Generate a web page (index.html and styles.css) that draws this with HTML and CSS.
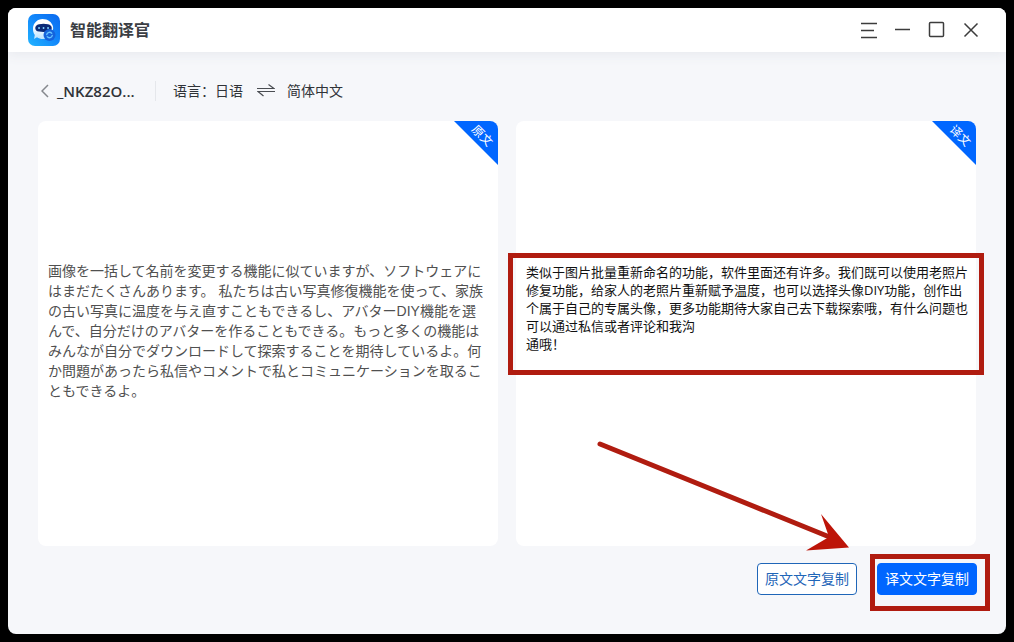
FILE: index.html
```html
<!DOCTYPE html>
<html lang="zh-CN">
<head>
<meta charset="utf-8">
<title>智能翻译官</title>
<link rel="stylesheet" href="styles.css">
</head>
<body>
<div class="window">
  <header class="titlebar">
    <svg class="logo" viewBox="0 0 32 32" aria-hidden="true">
      <defs>
        <linearGradient id="tile" x1="0" y1="1" x2="1" y2="0"><stop offset="0" stop-color="#22b4ff"/><stop offset=".5" stop-color="#1389fb"/><stop offset="1" stop-color="#0a68ee"/></linearGradient>
        <linearGradient id="face" x1="0" y1="0" x2="0" y2="1"><stop offset="0.4" stop-color="#fff"/><stop offset="1" stop-color="#b9e2ff"/></linearGradient>
      </defs>
      <rect width="32" height="32" rx="7" fill="url(#tile)"/>
      <path d="M14.500 5C20 5 24 8.500 25 12.500C26 18 22 25 15 25C12.500 25 10.500 24.300 9 23.200L6 25L6.800 21C5.400 19 4.800 16.500 5 14C5.300 9 9.500 5 14.500 5Z" fill="url(#face)"/>
      <path d="M11 10.200Q15.500 9.200 20 10.200C25 11.200 25 17 20 17.600Q15.500 18.400 11 17.600C6 17 6 11.200 11 10.200Z" fill="#0b2a78"/>
      <path d="M11 14h.1M15.500 14h.1M20 14h.1" fill="none" stroke="#7fd4ff" stroke-width="1.800" stroke-linecap="round"/>
      <circle cx="21.500" cy="21" r="6" fill="#1563dc"/>
      <path d="M18.700 20.700A2.900 2.900 0 0 1 23.800 19.300M24.300 21.300A2.900 2.900 0 0 1 19.200 22.700" fill="none" stroke="#66c4ff" stroke-width="1.300" stroke-linecap="round"/>
    </svg>
    <h1 class="app-name">智能翻译官</h1>
    <nav class="controls" aria-label="窗口">
      <button class="control" aria-label="菜单"><svg viewBox="0 0 18 18"><path d="M1 2.500h16M1 9.500h13M1 16.500h16"/></svg></button>
      <button class="control" aria-label="最小化"><svg viewBox="0 0 18 18"><path d="M1 8.500h15"/></svg></button>
      <button class="control" aria-label="最大化"><svg viewBox="0 0 18 18"><rect x="1.500" y="1.500" width="14" height="14" rx="1"/></svg></button>
      <button class="control" aria-label="关闭"><svg viewBox="0 0 18 18"><path d="M2.500 2.500l13 13M15.500 2.500l-13 13"/></svg></button>
    </nav>
  </header>
  <main class="content">
    <div class="toolbar">
      <button class="back" aria-label="返回"><svg viewBox="0 0 8 14"><path d="M7 1L1 7l6 6"/></svg></button>
      <strong class="file-name">_NKZ82O...</strong>
      <span class="language-label">语言：</span>
      <span>日语</span>
      <svg class="swap" viewBox="0 0 18 14" aria-hidden="true"><path d="M0 4.500h17L11.500 0.500M18 7.500H1L6.500 12"/></svg>
      <span>简体中文</span>
    </div>
    <div class="panels">
      <section class="panel">
        <span class="corner"><span class="corner-text">原文</span></span>
        <p class="source" lang="ja">画像を一括して名前を変更する機能に似ていますが、ソフトウェアに<br>はまだたくさんあります。 私たちは古い写真修復機能を使って、家族<br>の古い写真に温度を与え直すこともできるし、アバターDIY機能を選<br>んで、自分だけのアバターを作ることもできる。もっと多くの機能は<br>みんなが自分でダウンロードして探索することを期待しているよ。何<br>か問題があったら私信やコメントで私とコミュニケーションを取るこ<br>ともできるよ。</p>
      </section>
      <section class="panel">
        <span class="corner"><span class="corner-text">译文</span></span>
        <p class="translation">类似于图片批量重新命名的功能，软件里面还有许多。我们既可以使用老照片<br>修复功能，给家人的老照片重新赋予温度，也可以选择头像DIY功能，创作出<br>个属于自己的专属头像，更多功能期待大家自己去下载探索哦，有什么问题也<br>可以通过私信或者评论和我沟<br>通哦！</p>
        <span class="mark mark-text"></span>
        <svg class="arrow" viewBox="0 0 256 112" aria-hidden="true"><path class="shaft" d="M4 4L236 98"/><path class="head" d="M253 107.500L225 74L233 97L210 110.500Z"/></svg>
      </section>
    </div>
    <footer class="actions">
      <button class="button">原文文字复制</button>
      <div class="marked"><button class="button primary">译文文字复制</button><span class="mark mark-button"></span></div>
    </footer>
  </main>
</div>
</body>
</html>
```
FILE: styles.css
```css
* { box-sizing: border-box; }
body {
  margin: 0;
  padding: 8px;
  min-height: 100vh;
  display: flex;
  background: #000;
  color: #303338;
  font: 14px/20px "Open Sans", "Noto Sans CJK SC", sans-serif;
}
button { padding: 0; border: 0; background: none; font: inherit; color: inherit; }
svg { display: block; fill: none; }
.window {
  flex: 1;
  display: flex;
  flex-direction: column;
  overflow: hidden;
  border-radius: 8px;
  background: #f6f7fa;
}
.titlebar {
  display: flex;
  align-items: center;
  height: 44px;
  padding: 0 26px 0 20px;
  background: #fff;
  box-shadow: 0 2px 12px #e6e8ed;
}
.logo { width: 32px; height: 32px; }
.app-name { margin: 0 0 0 10px; font-size: 16px; line-height: 24px; font-weight: 700; color: #3b3e44; }
.controls { display: flex; gap: 16px; margin-left: auto; }
.control { width: 18px; height: 18px; }
.control svg { width: 18px; height: 18px; stroke: #3c3c3c; stroke-width: 1.5; }
.content { flex: 1; display: flex; flex-direction: column; padding: 28px 30px 39px; }
.toolbar { display: flex; align-items: center; height: 22px; }
.back { margin: 0 8px 0 3px; }
.back svg { width: 8px; height: 14px; stroke: #85888d; stroke-width: 1.5; }
.file-name { width: 99px; border-right: 1px solid #e5e7eb; font-size: 15px; font-weight: 600; }
.language-label { margin-left: 17px; }
.swap { width: 18px; height: 14px; margin: 0 12px 0 14px; stroke: #4a4d52; stroke-width: 1.2; }
.panels { flex: 1; display: grid; grid-template-columns: repeat(2, minmax(0, 1fr)); gap: 18px; margin-top: 19px; }
.panel { position: relative; border-radius: 8px; background: #fff; }
.panel p { margin: 0; white-space: nowrap; }
.source { padding: 140px 10px 0; color: #505050; font-family: "Liberation Sans", "Noto Sans CJK JP", sans-serif; }
.translation { padding: 142px 10px 0; color: #111; font-size: 13px; line-height: 18px; }
.corner {
  position: absolute;
  top: 0;
  right: 0;
  width: 44px;
  height: 44px;
  border-radius: 0 8px 0 0;
  background: #0066ff;
  clip-path: polygon(0 0, 100% 0, 100% 100%);
  color: #fff;
  font-size: 12px;
}
.corner-text { display: block; width: 30px; margin: 5px 0 0 13px; text-align: center; transform: rotate(45deg); }
.mark { position: absolute; border: 5px solid #b01c10; pointer-events: none; }
.mark-text { left: -8px; right: -8px; top: 132px; height: 122px; }
.mark-button { inset: -9px -13px -16px -7px; }
.arrow { position: absolute; right: 124px; bottom: -6px; width: 256px; height: 112px; z-index: 1; }
.shaft { stroke: #b01c10; stroke-width: 5; stroke-linecap: round; }
.head { fill: #bd1509; }
.actions { display: flex; justify-content: flex-end; gap: 20px; margin: 17px -1px 0 0; }
.button {
  display: block;
  width: 100px;
  height: 32px;
  border: 1px solid #1f66b8;
  border-radius: 4px;
  color: #1f66b8;
  background: #fff;
}
.primary { border-color: #0066ff; background: #0066ff; color: #fff; }
.marked { position: relative; }
```
